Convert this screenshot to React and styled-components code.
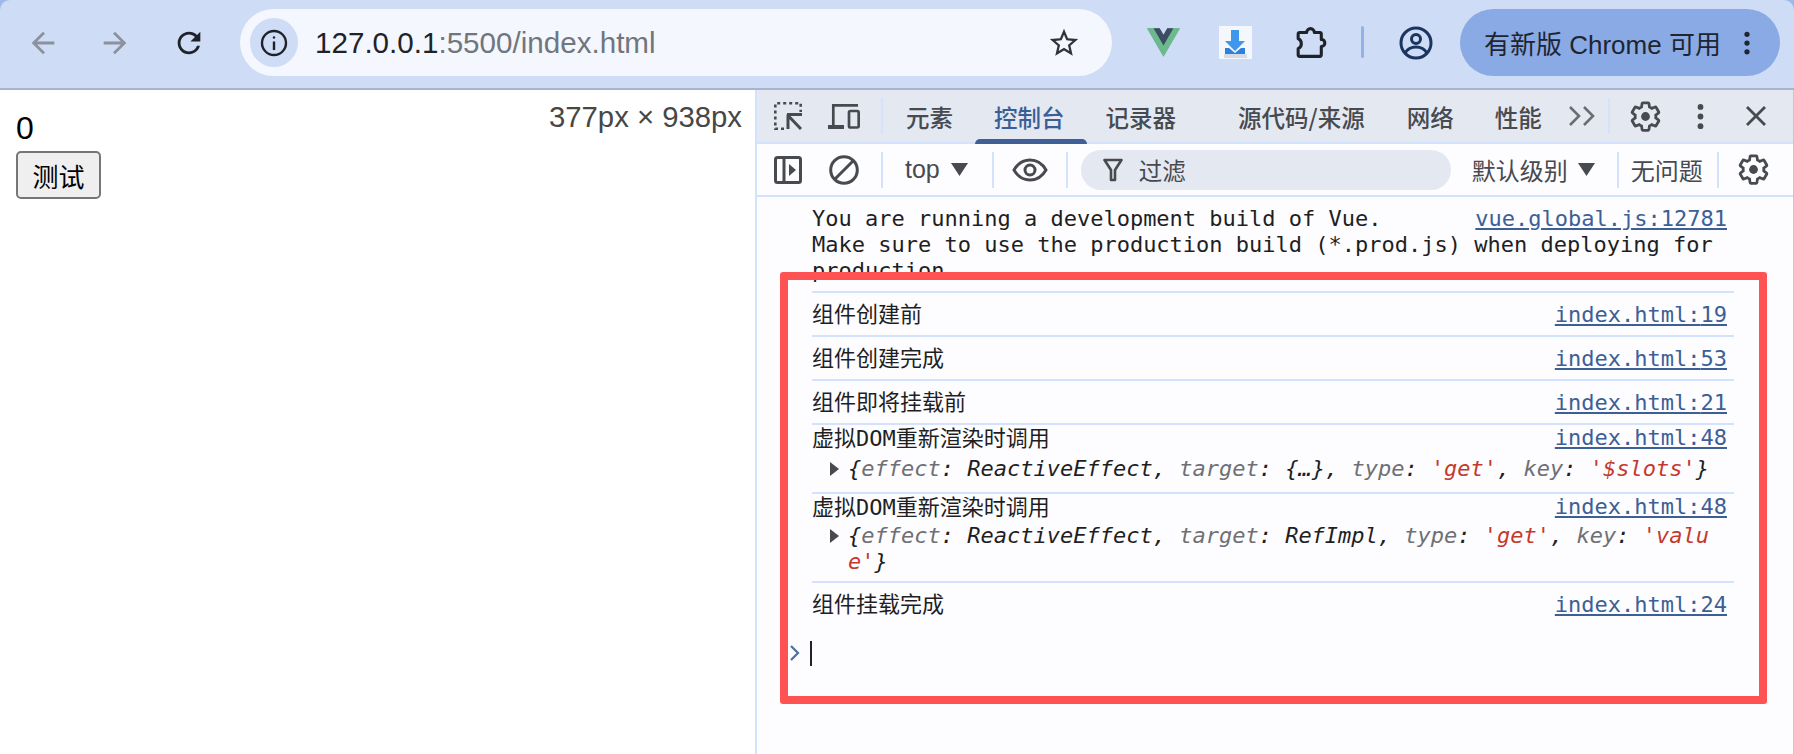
import styled, { createGlobalStyle } from 'styled-components';

const GlobalStyle = createGlobalStyle`
  html, body {
    margin: 0;
    padding: 0;
    height: 754px;
    overflow: hidden;
    background: #fff;
  }
  * { box-sizing: border-box; }
`;

const SANS = `"Liberation Sans", "Noto Sans CJK SC", sans-serif`;
const MONO = `"DejaVu Sans Mono", "Noto Sans CJK SC", monospace`;

const Window = styled.div`
  width: 1794px;
  height: 754px;
  display: flex;
  flex-direction: column;
  background: #9db9ea;
  overflow: hidden;
  font-family: ${SANS};
`;

const BrowserBar = styled.div`
  height: 90px;
  flex: none;
  display: flex;
  align-items: flex-start;
  padding: 9px 0 0 7px;
  background: #cedcf6;
  border-bottom: 2px solid #a9b4cc;
  border-radius: 10px 10px 0 0;
`;

const Slot = styled.div`
  flex: none;
  width: ${(p) => p.$w || 72}px;
  height: 67px;
  margin-left: ${(p) => p.$ml || 0}px;
  display: flex;
  align-items: center;
  justify-content: center;
  color: ${(p) => p.$color || '#1f2329'};
`;

const ToolSlot = styled(Slot)`
  height: 48px;
  color: #474a4f;
`;

const Omnibox = styled.div`
  flex: none;
  width: 872px;
  height: 67px;
  margin-left: 15px;
  padding: 0 30px 0 10px;
  display: flex;
  align-items: center;
  border-radius: 34px;
  background: #f4f7fd;
`;

const InfoChip = styled.div`
  flex: none;
  width: 48px;
  height: 49px;
  border-radius: 50%;
  background: #cedcf6;
  display: flex;
  align-items: center;
  justify-content: center;
`;

const Url = styled.div`
  flex: 1;
  margin-left: 17px;
  font-size: 29.6px;
  color: #71757c;
  white-space: nowrap;
  & > b {
    font-weight: 400;
    color: #1f2329;
  }
`;

const BarDivider = styled.div`
  flex: none;
  width: 3px;
  height: 32px;
  margin: 17px 16px 0 15px;
  border-radius: 2px;
  background: #92b2e6;
`;

const UpdatePill = styled.div`
  flex: none;
  width: 320px;
  height: 67px;
  margin-left: 8px;
  padding: 0 18px 0 24px;
  display: flex;
  align-items: center;
  justify-content: space-between;
  border-radius: 34px;
  background: #8aaae5;
  color: #1f2530;
  font-size: 26px;
  white-space: nowrap;
`;

const Main = styled.div`
  flex: 1;
  display: flex;
  min-height: 0;
  background: #fff;
`;

const Page = styled.div`
  position: relative;
  flex: none;
  width: 755px;
  padding: 8px 16px;
  background: #fff;
`;

const Counter = styled.div`
  height: 43px;
  padding-top: 13px;
  font-size: 32px;
  line-height: 34px;
  color: #000;
`;

const TestButton = styled.button`
  display: block;
  width: 85px;
  height: 48px;
  margin-top: 10px;
  padding: 0;
  border: 2px solid #767676;
  border-radius: 5px;
  background: #efefef;
  font-family: ${SANS};
  font-size: 26px;
  color: #000;
`;

const SizeBadge = styled.div`
  position: absolute;
  top: 10px;
  right: 13px;
  font-size: 29.3px;
  line-height: 34px;
  color: #474747;
`;

const DevTools = styled.div`
  flex: 1;
  position: relative;
  display: flex;
  flex-direction: column;
  min-width: 0;
  border-left: 2px solid #d3e3fd;
  border-right: 1px solid #c8c8c8;
  background: #fdfcff;
`;

const TabBar = styled.div`
  height: 54px;
  flex: none;
  display: flex;
  align-items: center;
  padding-left: 3px;
  background: #e4e8f1;
  border-bottom: 2px solid #d3e3fd;
  color: #474a4f;
`;

const Tab = styled.div`
  position: relative;
  flex: none;
  height: 52px;
  margin-left: ${(p) => p.$ml}px;
  padding-top: 2px;
  display: flex;
  align-items: center;
  font-family: "Noto Sans CJK SC", sans-serif;
  font-size: 23.5px;
  font-weight: 500;
  white-space: nowrap;
  color: ${(p) => (p.$active ? '#3b5d96' : '#474a4f')};
  ${(p) =>
    p.$active &&
    `&::after {
      content: '';
      position: absolute;
      left: -19px;
      right: -22px;
      bottom: -2px;
      height: 5px;
      border-radius: 5px 5px 0 0;
      background: #3f5f96;
    }`}
`;

const ThinDivider = styled.div`
  flex: none;
  width: 2px;
  height: ${(p) => p.$h || 36}px;
  margin-left: ${(p) => p.$ml || 0}px;
  background: #d3e3fd;
`;

const ConsoleBar = styled.div`
  height: 53px;
  flex: none;
  display: flex;
  align-items: center;
  padding-left: 3px;
  background: #fdfcff;
  border-bottom: 2px solid #d3e3fd;
  color: #474a4f;
`;

const BarText = styled.span`
  flex: none;
  margin-left: ${(p) => p.$ml || 0}px;
  font-family: "Noto Sans CJK SC", sans-serif;
  font-size: ${(p) => p.$size || 24}px;
  color: #474a4f;
  white-space: nowrap;
`;

const TopText = styled(BarText)`
  font-family: "Liberation Sans", sans-serif;
  font-size: 25px;
`;

const FilterBox = styled.div`
  flex: none;
  width: 370px;
  height: 40px;
  margin-left: 13px;
  padding-left: 22px;
  display: flex;
  align-items: center;
  border-radius: 20px;
  background: #e4e8f1;
`;

const Log = styled.div`
  flex: 1;
  font-family: ${MONO};
  font-size: 22px;
  line-height: 26px;
  color: #1f1f1f;
`;

const Message = styled.div`
  margin-left: 55px;
  width: 922px;
  padding: ${(p) => p.$pad || '9px 0 7px'};
  border-top: ${(p) => (p.$first ? 'none' : '2px solid #d3e3fd')};
`;

const MessageText = styled.div`
  line-height: 28px;
`;

const SourceLink = styled.a`
  float: right;
  margin-right: 7px;
  color: #3c5f96;
  text-decoration: underline;
`;

const ObjectLine = styled.div`
  position: relative;
  clear: both;
  width: 870px;
  margin: ${(p) => p.$mt}px 0 0 36px;
  font-style: italic;
  word-break: break-all;
`;

const Disclosure = styled.span`
  position: absolute;
  left: -18px;
  top: 6px;
  width: 0;
  height: 0;
  border-left: 9px solid #474a4f;
  border-top: 7px solid transparent;
  border-bottom: 7px solid transparent;
`;

const Key = styled.span`
  color: #6f7074;
`;

const Str = styled.span`
  color: #c5392b;
`;

const Prompt = styled.div`
  margin-top: 15px;
  height: 26px;
  display: flex;
  align-items: center;
  padding-left: 32px;
  color: #4a6fa8;
`;

const Caret = styled.div`
  width: 2px;
  height: 25px;
  margin-left: 9px;
  background: #1f2329;
`;

const Highlight = styled.div`
  position: absolute;
  left: 23px;
  top: 182px;
  width: 987px;
  height: 432px;
  border: 8px solid #ff5252;
  border-radius: 3px;
  pointer-events: none;
`;

const Icon = ({ size = 24, children, ...rest }) => (
  <svg width={size} height={size} viewBox="0 0 24 24" fill="currentColor" {...rest}>
    {children}
  </svg>
);

const ArrowIcon = ({ flip }) => (
  <Icon size={34} style={flip ? { transform: 'scaleX(-1)' } : undefined}>
    <path d="M20 11H7.83l5.59-5.59L12 4l-8 8 8 8 1.41-1.41L7.83 13H20v-2z" />
  </Icon>
);

const GearIcon = () => (
  <Icon size={33}>
    <path
      fill="none"
      stroke="currentColor"
      strokeWidth="2"
      d="M19.43 12.98c.04-.32.07-.64.07-.98s-.03-.66-.07-.98l2.11-1.65c.19-.15.24-.42.12-.64l-2-3.46c-.12-.22-.39-.3-.61-.22l-2.49 1c-.52-.4-1.08-.73-1.69-.98l-.38-2.65C14.46 2.18 14.25 2 14 2h-4c-.25 0-.46.18-.49.42l-.38 2.65c-.61.25-1.17.59-1.69.98l-2.49-1c-.23-.09-.49 0-.61.22l-2 3.46c-.13.22-.07.49.12.64l2.11 1.65c-.04.32-.07.65-.07.98s.03.66.07.98l-2.11 1.65c-.19.15-.24.42-.12.64l2 3.46c.12.22.39.3.61.22l2.49-1c.52.4 1.08.73 1.69.98l.38 2.65c.03.24.24.42.49.42h4c.25 0 .46-.18.49-.42l.38-2.65c.61-.25 1.17-.59 1.69-.98l2.49 1c.23.09.49 0 .61-.22l2-3.46c.12-.22.07-.49-.12-.64l-2.11-1.65z"
    />
    <circle cx="12" cy="12" r="3.2" />
  </Icon>
);

const KebabIcon = ({ size = 33 }) => (
  <Icon size={size}>
    <circle cx="12" cy="5" r="2.1" />
    <circle cx="12" cy="12" r="2.1" />
    <circle cx="12" cy="19" r="2.1" />
  </Icon>
);

const DropTriangle = () => (
  <svg width="17" height="13" viewBox="0 0 17 13" fill="currentColor">
    <path d="M0 0h17L8.5 13z" />
  </svg>
);

const VueLogo = () => (
  <svg width="33" height="29" viewBox="0 0 256 221">
    <path fill="#6cb98d" d="M204.8 0H256L128 220.8 0 0h97.92L128 51.2 157.44 0z" />
    <path fill="#6cb98d" d="M0 0l128 220.8L256 0h-51.2L128 132.48 50.56 0z" />
    <path fill="#3d4c63" d="M50.56 0L128 133.12 204.8 0h-47.36L128 51.2 97.92 0z" />
  </svg>
);

const DownloadLogo = () => (
  <svg width="33" height="33" viewBox="0 0 33 33">
    <rect width="33" height="33" fill="#f4f7fc" />
    <path fill="#3f97ec" d="M12 4h8v11h6l-10 10L6 15h6z" />
    <path fill="#2f7fe0" d="M6 22h4l6 5 6-5h4v6H6z" />
    <rect x="5" y="28" width="23" height="4" fill="#d5dce6" />
  </svg>
);

const PuzzleIcon = () => (
  <Icon size={37}>
    <path
      fill="none"
      stroke="currentColor"
      strokeWidth="2"
      strokeLinejoin="round"
      d="M5 5.5H9.5A2.5 2.5 0 0 1 14.5 5.5H18a1 1 0 0 1 1 1V10a2.3 2.3 0 0 1 0 4.6V20a1 1 0 0 1-1 1H5a1 1 0 0 1-1-1V16A3.6 3.6 0 0 0 4 9.5V6.5a1 1 0 0 1 1-1z"
    />
  </Icon>
);

const ProfileIcon = () => (
  <svg width="34" height="34" viewBox="0 0 34 34" fill="none" stroke="#1a3560" strokeWidth="3">
    <circle cx="17" cy="17" r="15" />
    <circle cx="17" cy="13" r="4.5" />
    <path d="M6 27c3-5 7-6 11-6s8 1 11 6" />
  </svg>
);

const InspectIcon = () => (
  <svg width="28" height="28" viewBox="0 0 28 28" fill="none" stroke="currentColor" strokeWidth="2.6">
    <path strokeDasharray="3 3" d="M10 26.7H1.3V1.3H26.7V10" />
    <path strokeWidth="3" d="M13 12.5H28M14 12.5V27M14 13.5L27 27" />
  </svg>
);

const DeviceIcon = () => (
  <svg width="32" height="25" viewBox="0 0 32 25" fill="none" stroke="currentColor">
    <path strokeWidth="2.7" d="M5.3 23V1.4H30" />
    <path strokeWidth="4" d="M0 23h16" />
    <rect x="21" y="7" width="9.7" height="16.5" rx="1.5" strokeWidth="2.7" />
  </svg>
);

const PanelIcon = () => (
  <svg width="28" height="28" viewBox="0 0 28 28" fill="none" stroke="currentColor" strokeWidth="3">
    <rect x="1.5" y="1.5" width="25" height="25" rx="2" />
    <path d="M10 2v24" />
    <path fill="currentColor" stroke="none" d="M15 8l7 6-7 6z" />
  </svg>
);

const BlockIcon = () => (
  <svg width="30" height="30" viewBox="0 0 30 30" fill="none" stroke="currentColor" strokeWidth="3">
    <circle cx="15" cy="15" r="13.3" />
    <path d="M5.5 24.5L24.5 5.5" />
  </svg>
);

const EyeIcon = () => (
  <svg width="36" height="24" viewBox="0 0 36 24" fill="none" stroke="currentColor" strokeWidth="3">
    <path d="M2 12C6 5 12 2 18 2s12 3 16 10c-4 7-10 10-16 10S6 19 2 12z" />
    <circle cx="18" cy="12" r="5" />
  </svg>
);

const FunnelIcon = () => (
  <svg width="20" height="24" viewBox="0 0 20 24" fill="none" stroke="currentColor" strokeWidth="2.6">
    <path d="M1.5 2h17L12 12v10H8V12z" strokeLinejoin="round" />
  </svg>
);

const ChevronsIcon = () => (
  <svg width="28" height="22" viewBox="0 0 28 22" fill="none" stroke="#6a6d73" strokeWidth="2.6">
    <path d="M2 2l9 9-9 9M16 2l9 9-9 9" />
  </svg>
);

const CloseIcon = () => (
  <svg width="22" height="22" viewBox="0 0 22 22" fill="none" stroke="currentColor" strokeWidth="2.8">
    <path d="M2 2l18 18M20 2L2 20" />
  </svg>
);

const simpleLogs = [
  { text: '组件创建前', line: 19 },
  { text: '组件创建完成', line: 53 },
  { text: '组件即将挂载前', line: 21 },
];

function App() {
  return (
    <Window>
      <GlobalStyle />
      <BrowserBar>
        <Slot $color="#8b929c">
          <ArrowIcon />
        </Slot>
        <Slot $color="#8b929c">
          <ArrowIcon flip />
        </Slot>
        <Slot $ml={2}>
          <Icon size={34}>
            <path d="M17.65 6.35A7.958 7.958 0 0 0 12 4c-4.42 0-7.99 3.58-7.99 8s3.57 8 7.99 8c3.73 0 6.84-2.55 7.73-6h-2.08A5.99 5.99 0 0 1 12 18c-3.31 0-6-2.69-6-6s2.69-6 6-6c1.66 0 3.14.69 4.22 1.78L13 11h7V4l-2.35 2.35z" />
          </Icon>
        </Slot>
        <Omnibox>
          <InfoChip>
            <svg width="28" height="28" viewBox="0 0 28 28" fill="none" stroke="#1f2329" strokeWidth="2.4">
              <circle cx="14" cy="14" r="12" />
              <path d="M14 12.5V21" />
              <circle cx="14" cy="8.5" r="1.2" fill="#1f2329" stroke="none" />
            </svg>
          </InfoChip>
          <Url>
            <b>127.0.0.1</b>:5500/index.html
          </Url>
          <Slot $w={36} $color="#30343a">
            <Icon size={34}>
              <path d="M22 9.24l-7.19-.62L12 2 9.19 8.63 2 9.24l5.46 4.73L5.82 21 12 17.27 18.18 21l-1.63-7.03L22 9.24zM12 15.4l-3.76 2.27 1-4.28-3.32-2.88 4.38-.38L12 6.1l1.71 4.04 4.38.38-3.32 2.88 1 4.28L12 15.4z" />
            </Icon>
          </Slot>
        </Omnibox>
        <Slot $ml={15}>
          <VueLogo />
        </Slot>
        <Slot>
          <DownloadLogo />
        </Slot>
        <Slot $ml={3}>
          <PuzzleIcon />
        </Slot>
        <BarDivider />
        <Slot>
          <ProfileIcon />
        </Slot>
        <UpdatePill>
          有新版 Chrome 可用
          <KebabIcon size={30} />
        </UpdatePill>
      </BrowserBar>

      <Main>
        <Page>
          <Counter>0</Counter>
          <TestButton>测试</TestButton>
          <SizeBadge>377px × 938px</SizeBadge>
        </Page>

        <DevTools>
          <TabBar>
            <ToolSlot $w={56}>
              <InspectIcon />
            </ToolSlot>
            <ToolSlot $w={56}>
              <DeviceIcon />
            </ToolSlot>
            <ThinDivider $ml={9} />
            <Tab $ml={23}>元素</Tab>
            <Tab $ml={41} $active>
              控制台
            </Tab>
            <Tab $ml={41}>记录器</Tab>
            <Tab $ml={62}>源代码/来源</Tab>
            <Tab $ml={42}>网络</Tab>
            <Tab $ml={41}>性能</Tab>
            <ToolSlot $w={40} $ml={20}>
              <ChevronsIcon />
            </ToolSlot>
            <ThinDivider $ml={6} />
            <ToolSlot $w={60} $ml={6}>
              <GearIcon />
            </ToolSlot>
            <ToolSlot $w={56} $ml={-3}>
              <KebabIcon />
            </ToolSlot>
            <ToolSlot $w={56} $ml={-1}>
              <CloseIcon />
            </ToolSlot>
          </TabBar>

          <ConsoleBar>
            <ToolSlot $w={56}>
              <PanelIcon />
            </ToolSlot>
            <ToolSlot $w={56}>
              <BlockIcon />
            </ToolSlot>
            <ThinDivider $ml={9} />
            <TopText $ml={22}>top</TopText>
            <ToolSlot $w={40}>
              <DropTriangle />
            </ToolSlot>
            <ThinDivider $ml={12} />
            <ToolSlot $w={72}>
              <EyeIcon />
            </ToolSlot>
            <ThinDivider />
            <FilterBox>
              <FunnelIcon />
              <BarText $ml={16} $size={23.5}>过滤</BarText>
            </FilterBox>
            <BarText $ml={21}>默认级别</BarText>
            <ToolSlot $w={38}>
              <DropTriangle />
            </ToolSlot>
            <ThinDivider $ml={11} />
            <BarText $ml={12}>无问题</BarText>
            <ThinDivider $ml={14} />
            <ToolSlot $w={70}>
              <GearIcon />
            </ToolSlot>
          </ConsoleBar>

          <Log>
            <Message $first $pad="9px 0 7px">
              <SourceLink>vue.global.js:12781</SourceLink>
              You are running a development build of Vue.
              <br />
              Make sure to use the production build (*.prod.js) when deploying for production.
            </Message>

            {simpleLogs.map((log) => (
              <Message key={log.line}>
                <SourceLink>index.html:{log.line}</SourceLink>
                {log.text}
              </Message>
            ))}

            <Message $pad="0 0 10px">
              <SourceLink>index.html:48</SourceLink>
              <MessageText>虚拟DOM重新渲染时调用</MessageText>
              <ObjectLine $mt={3}>
                <Disclosure />
                {'{'}
                <Key>effect</Key>: ReactiveEffect, <Key>target</Key>: {'{…}'}, <Key>type</Key>:{' '}
                <Str>'get'</Str>, <Key>key</Key>: <Str>'$slots'</Str>
                {'}'}
              </ObjectLine>
            </Message>

            <Message $pad="0 0 6px">
              <SourceLink>index.html:48</SourceLink>
              <MessageText>虚拟DOM重新渲染时调用</MessageText>
              <ObjectLine $mt={1}>
                <Disclosure />
                {'{'}
                <Key>effect</Key>: ReactiveEffect, <Key>target</Key>: RefImpl, <Key>type</Key>:{' '}
                <Str>'get'</Str>, <Key>key</Key>: <Str>'value'</Str>
                {'}'}
              </ObjectLine>
            </Message>

            <Message>
              <SourceLink>index.html:24</SourceLink>
              组件挂载完成
            </Message>

            <Prompt>
              <svg width="12" height="16" viewBox="0 0 12 16" fill="none" stroke="currentColor" strokeWidth="2.2">
                <path d="M2 1l7 7-7 7" />
              </svg>
              <Caret />
            </Prompt>
          </Log>

          <Highlight />
        </DevTools>
      </Main>
    </Window>
  );
}

export default App;
